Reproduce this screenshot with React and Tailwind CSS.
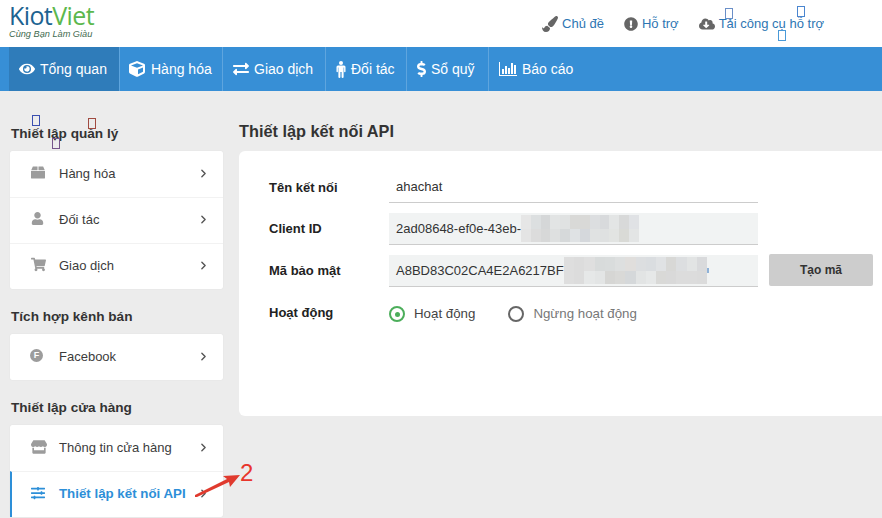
import React from 'react';
import {
  FaEye, FaCube, FaExchangeAlt, FaDollarSign, FaPaintBrush, FaExclamationCircle,
  FaCloudDownloadAlt, FaUser, FaShoppingCart, FaStore, FaSlidersH,
} from 'react-icons/fa';
import { ChevronRight } from 'lucide-react';

const font = { sans: 'font-["Liberation_Sans",Arial,sans-serif]' };

const navItems = [
  { label: 'Tổng quan', icon: <FaEye size={16} />, width: 'w-[111px]', pad: 'pl-[10px] gap-[5px]', active: true },
  { label: 'Hàng hóa', icon: <FaCube size={16} />, width: 'w-[103px]', pad: 'pl-[9px] gap-[6px]' },
  { label: 'Giao dịch', icon: <FaExchangeAlt size={16} />, width: 'w-[103px]', pad: 'pl-[10px] gap-[5px]' },
  { label: 'Đối tác', icon: <MaleIcon />, width: 'w-[81px]', pad: 'pl-[10px] gap-[5px]' },
  { label: 'Sổ quỹ', icon: <FaDollarSign size={16} className="w-[9px]" />, width: 'w-[82px]', pad: 'pl-[10px] gap-[5px]' },
  { label: 'Báo cáo', icon: <ChartIcon />, width: 'w-[100px]', pad: 'pl-[10px] gap-[5px]', last: true },
];

const blurA = [
  ['#e6e6e6', '#dcdfe0', '#d5d7d8', '#e2e4e4', '#e0e2e2', '#d9d9d7', '#d9d9d7', '#dcdee0', '#d8dadc', '#e3e5e5', '#d8d9d9', '#e0e2e5'],
  ['#e4e4e4', '#dcdcdc', '#d7d8d8', '#dee0e0', '#d6d9da', '#dfe2e4', '#d5d8dc', '#e0e2e2', '#dfe1e1', '#e2e4e2', '#d9dad6', '#e3e5e5'],
];

const blurB = [
  ['#dedede', '#dcdcdc', '#dfdfdf', '#d8dbdb', '#d9dcdc', '#dddfdf', '#e0dedc', '#dcdee0', '#dadde0', '#e0e2e4', '#d8d8d6', '#dcdee0', '#e2e4e4', '#d9dadc'],
  ['#dedede', '#dcdcdc', '#e6e8e8', '#e3e5e5', '#d6d6d4', '#d9d9d7', '#d5d8da', '#e2e4e4', '#e6e8e8', '#d9d9d7', '#d9d9d9', '#dcdcdc', '#dcdcdc', '#dbdbdb'],
];

function MaleIcon() {
  return (
    <svg width="10" height="17" viewBox="0 0 10 17" fill="currentColor">
      <circle cx="5" cy="2" r="2" />
      <path d="M2 4.5h6a1.5 1.5 0 0 1 1.5 1.5v4.6a.7.7 0 0 1-1.4 0V6.6h-.5V16a1 1 0 0 1-2 0v-5h-1.2v5a1 1 0 0 1-2 0V6.6h-.5v4a.7.7 0 0 1-1.4 0V6A1.5 1.5 0 0 1 2 4.5z" />
    </svg>
  );
}

function ChartIcon() {
  return (
    <svg width="18" height="14" viewBox="0 0 18 14" fill="currentColor">
      <path d="M0 0h1v13h17v1H0z" />
      <rect x="3" y="7" width="2" height="5" />
      <rect x="6" y="4" width="2" height="8" />
      <rect x="9" y="6" width="2" height="6" />
      <rect x="12" y="1" width="2" height="11" />
      <rect x="15" y="3" width="2" height="9" />
    </svg>
  );
}

function BoxIcon() {
  return (
    <svg width="14" height="13" viewBox="0 0 15 13" fill="#9c9c9c">
      <path d="M2 0h5v4H0.2zM8 0h5l1.8 4H8zM0 5h15v7a1 1 0 0 1-1 1H1a1 1 0 0 1-1-1z" />
    </svg>
  );
}

function FbIcon() {
  return (
    <span className="-ml-px flex h-[13px] w-[13px] items-center justify-center rounded-full bg-[#9c9c9c] text-[9px] font-bold leading-none text-white">
      F
    </span>
  );
}

function Tofu({ className, color }) {
  return <span className={`absolute h-[11px] w-[8px] border ${color} ${className}`} />;
}

function Pixelated({ rows, className }) {
  return (
    <div className={`absolute flex flex-col ${className}`}>
      {rows.map((row, i) => (
        <div key={i} className="flex flex-1">
          {row.map((c, j) => (
            <div key={j} className="flex-1" style={{ backgroundColor: c }} />
          ))}
        </div>
      ))}
    </div>
  );
}

function SideCard({ items, className = '' }) {
  return (
    <div className={`rounded-[2px] bg-white shadow-[0_0_1px_rgba(0,0,0,0.12)] ${className}`}>
      {items.map((item, i) => (
        <div
          key={item.label}
          className={`flex h-[46px] items-center border-t pr-[13px] ${i > 0 ? 'border-[#f2f2f2]' : 'border-transparent'} ${
            item.active ? 'border-l-2 border-l-[#2d8fd8] pl-[19px]' : 'pl-[21px]'
          }`}
        >
          <span className="flex w-[28px] -translate-y-[2px] justify-start text-[#9c9c9c]">{item.icon}</span>
          <span className={`flex-1 -translate-y-px ${item.active ? 'text-[13.3px] font-bold text-[#2d8fd8]' : 'text-[13px] text-[#3c3c3c]'}`}>
            {item.label}
          </span>
          <ChevronRight size={13} strokeWidth={2.6} className="-translate-y-px text-[#555]" />
        </div>
      ))}
    </div>
  );
}

function SideTitle({ children, className = '' }) {
  return <h3 className={`pl-px text-[13.6px] font-bold leading-5 text-[#333] ${className}`}>{children}</h3>;
}

function FormRow({ label, children, className = '', labelClass = '' }) {
  return (
    <div className={`flex items-center ${className}`}>
      <label className={`w-[120px] text-[13px] font-bold text-[#222] ${labelClass}`}>{label}</label>
      {children}
    </div>
  );
}

export default function App() {
  return (
    <div className={`relative h-[518px] w-[882px] overflow-hidden bg-[#ececec] ${font.sans}`}>
      <header className="flex h-[47px] items-start justify-between bg-white pl-[9px]">
        <div>
          <div className='font-["Open_Sans",sans-serif] text-[25px] leading-[30px] tracking-[-0.6px]'>
            <span className="text-[#1c6391]">Kiot</span>
            <span className="text-[#5cb84d]">Viet</span>
          </div>
          <div className="text-[9.2px] italic leading-[9px] text-[#3f6b4f]">Cùng Bạn Làm Giàu</div>
        </div>
        <nav className="relative flex items-center gap-[20px] pr-[58px] pt-[16px] text-[13px] leading-4 text-[#2e76b3]">
          <a className="flex items-center gap-[4px]">
            <FaPaintBrush size={16} className="text-[#666]" /> Chủ đề
          </a>
          <a className="flex items-center gap-[4px]">
            <FaExclamationCircle size={14} className="text-[#666]" /> Hỗ trợ
          </a>
          <a className="flex items-center gap-[4px]">
            <FaCloudDownloadAlt size={16} className="text-[#666]" /> Tải công cụ hỗ trợ
          </a>
          <Tofu className="left-[183px] top-[8px]" color="border-[#6a8fc8]" />
          <Tofu className="left-[255px] top-[6px]" color="border-[#4a86d0]" />
          <Tofu className="left-[236px] top-[30px]" color="border-[#4a9ad8]" />
        </nav>
      </header>

      <nav className="flex h-[44px] bg-[#378fd6] pl-[9px] text-[14px] text-white">
        {navItems.map((item) => (
          <a
            key={item.label}
            className={`flex items-center ${item.pad} ${item.width} ${
              item.active ? 'bg-[#2f7cba]' : ''
            } ${item.last ? '' : 'border-r border-[#5ea5de]'}`}
          >
            {item.icon}
            {item.label}
          </a>
        ))}
      </nav>

      <main className="flex pl-[10px]">
        <aside className="relative w-[213px] shrink-0 pt-[33px]">
          <SideTitle className="mb-[7px]">Thiết lập quản lý</SideTitle>
          <Tofu className="left-[22px] top-[24px]" color="border-[#3a4fb0]" />
          <Tofu className="left-[78px] top-[27px]" color="border-[#a04a40]" />
          <Tofu className="left-[42px] top-[47px]" color="border-[#75558a]" />
          <SideCard
            items={[
              { label: 'Hàng hóa', icon: <BoxIcon /> },
              { label: 'Đối tác', icon: <FaUser size={13} /> },
              { label: 'Giao dịch', icon: <FaShoppingCart size={15} /> },
            ]}
          />
          <SideTitle className="mb-[7px] mt-[18px]">Tích hợp kênh bán</SideTitle>
          <SideCard items={[{ label: 'Facebook', icon: <FbIcon /> }]} />
          <SideTitle className="mb-[7px] mt-[18px]">Thiết lập cửa hàng</SideTitle>
          <SideCard
            items={[
              { label: 'Thông tin cửa hàng', icon: <FaStore size={16} /> },
              { label: 'Thiết lập kết nối API', icon: <FaSlidersH size={14} className="text-[#2d8fd8]" />, active: true },
            ]}
          />
        </aside>

        <section className="ml-[16px] flex-1 pt-[30px]">
          <h2 className="mb-[10px] text-[16.3px] font-bold leading-5 text-[#333]">Thiết lập kết nối API</h2>
          <div className="h-[265px] rounded-l-[6px] bg-white pl-[30px] pt-[21px]">
            <FormRow label="Tên kết nối" className="h-[31px]">
              <div className="flex h-[31px] w-[369px] items-center border-b border-[#ccc] pl-[7px] text-[13px] text-[#333]">
                ahachat
              </div>
            </FormRow>
            <FormRow label="Client ID" className="mt-[10px] h-[32px]">
              <div className="relative flex h-[32px] w-[369px] items-center border-b border-[#ccc] bg-[#f1f3f3] pl-[7px] text-[13px] text-[#333]">
                2ad08648-ef0e-43eb-
                <Pixelated rows={blurA} className="left-[132px] top-[2px] h-[27px] w-[118px]" />
              </div>
            </FormRow>
            <FormRow label="Mã bảo mật" className="mt-[10px] h-[32px]">
              <div className="relative flex h-[32px] w-[369px] items-center border-b border-[#ccc] bg-[#f1f3f3] pl-[7px] text-[13px] text-[#333]">
                A8BD83C02CA4E2A6217BF
                <Pixelated rows={blurB} className="left-[175px] top-[2px] h-[27px] w-[143px]" />
                <span className="absolute left-[318px] top-[13px] h-[5px] w-[2px] bg-[#8fb2d8]" />
              </div>
              <button className="-mt-[2px] ml-[11px] h-[32px] w-[104px] rounded-[2px] bg-[#cdcdcd] text-[12px] font-bold text-[#333]">
                Tạo mã
              </button>
            </FormRow>
            <FormRow label="Hoạt động" className="mt-[11px] h-[32px]" labelClass="-translate-y-px">
              <div className="flex items-center text-[13.3px]">
                <span className="flex h-[16px] w-[16px] items-center justify-center rounded-full border-2 border-[#4cae5b]">
                  <span className="h-[5px] w-[5px] rounded-full bg-[#4cae5b]" />
                </span>
                <span className="ml-[9px] text-[#444]">Hoạt động</span>
                <span className="ml-[33px] h-[16px] w-[16px] rounded-full border-2 border-[#666]" />
                <span className="ml-[9px] text-[#777]">Ngừng hoạt động</span>
              </div>
            </FormRow>
          </div>
        </section>
      </main>

      {/* hand drawn annotation */}
      <svg className="absolute left-[192px] top-[470px]" width="50" height="28" viewBox="0 0 50 28" fill="#e03a2e">
        <path d="M3 27 L3 25 L35 9 L31 6 L48 5 L38 17 L37 12 L5 27 Z" />
      </svg>
      <span className="absolute left-[240px] top-[459px] text-[24px] leading-7 text-[#e8352b]">2</span>
    </div>
  );
}
